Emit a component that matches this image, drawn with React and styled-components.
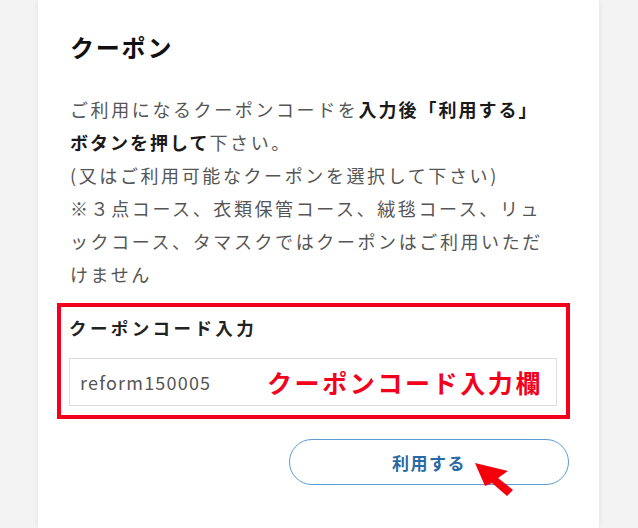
import React from 'react'
import styled, { createGlobalStyle } from 'styled-components'

const GlobalStyle = createGlobalStyle`
  html, body {
    margin: 0;
    padding: 0;
    background: #f3f3f3;
  }
  body {
    font-family: "Noto Sans CJK JP", "Noto Sans", sans-serif;
  }
`

const Page = styled.div`
  width: 638px;
  height: 528px;
  overflow: hidden;
  background: #f3f3f3;
`

const Card = styled.section`
  position: relative;
  margin-left: 38px;
  width: 561px;
  height: 528px;
  box-sizing: border-box;
  padding: 28px 32px 0 32px;
  background: #fff;
  box-shadow: 0 0 6px rgba(0, 0, 0, 0.08);
`

const Title = styled.h2`
  margin: 0;
  font-size: 24px;
  line-height: 38px;
  font-weight: 700;
  color: #111;
  letter-spacing: 1.8px;
`

const Notice = styled.p`
  margin: 27px 0 0 0;
  font-size: 18px;
  line-height: 33px;
  letter-spacing: 2.6px;
  color: #555;
  width: 482px;

  strong {
    color: #1a1a1a;
    font-weight: 700;
    letter-spacing: 2px;
  }
`

const Highlight = styled.div`
  margin: 12px -3px 0 -13px;
  border: 4px solid #f2001c;
  padding: 9px 9px 9px 8px;
`

const Label = styled.div`
  font-size: 17.5px;
  line-height: 24px;
  font-weight: 700;
  color: #222;
  letter-spacing: 3.4px;
`

const Field = styled.div`
  position: relative;
  margin-top: 18px;
  height: 48px;
  box-sizing: border-box;
  border: 1px solid #dcdcdc;
  display: flex;
  align-items: center;
  padding-left: 10px;
  font-size: 18px;
  color: #555;
  letter-spacing: 1.2px;
`

const FieldNote = styled.span`
  position: absolute;
  left: 197px;
  top: 50%;
  transform: translateY(-50%);
  font-size: 25px;
  font-weight: 700;
  color: #f2001c;
  letter-spacing: 2.6px;
  white-space: nowrap;
`

const Actions = styled.div`
  display: flex;
  justify-content: flex-end;
  margin-top: 20px;
  margin-right: -2px;
`

const UseButton = styled.button`
  position: relative;
  width: 280px;
  height: 46px;
  border-radius: 23px;
  border: 1.5px solid #5b9bd0;
  background: #fff;
  color: #2a6aa4;
  font-family: inherit;
  font-size: 17px;
  font-weight: 700;
  letter-spacing: 1.5px;
  cursor: pointer;
`

const Pointer = styled.svg`
  position: absolute;
  left: 184px;
  top: 22px;
`

export default function App() {
  return (
    <>
      <GlobalStyle />
      <Page>
        <Card>
          <Title>クーポン</Title>
          <Notice>
            ご利用になるクーポンコードを<strong>入力後「利用する」ボタンを押して</strong>下さい。
            <br />
            (又はご利用可能なクーポンを選択して下さい)
            <br />
            ※３点コース、衣類保管コース、絨毯コース、リュックコース、タマスクではクーポンはご利用いただけません
          </Notice>
          <Highlight>
            <Label>クーポンコード入力</Label>
            <Field>
              reform150005
              <FieldNote>クーポンコード入力欄</FieldNote>
            </Field>
          </Highlight>
          <Actions>
            <UseButton>
              利用する
              <Pointer width="42" height="38" viewBox="0 0 42 38">
                <polygon points="1,1 34,9 24,16 39,28 33,34 18,21 11,24" fill="#f5000a" />
              </Pointer>
            </UseButton>
          </Actions>
        </Card>
      </Page>
    </>
  )
}
